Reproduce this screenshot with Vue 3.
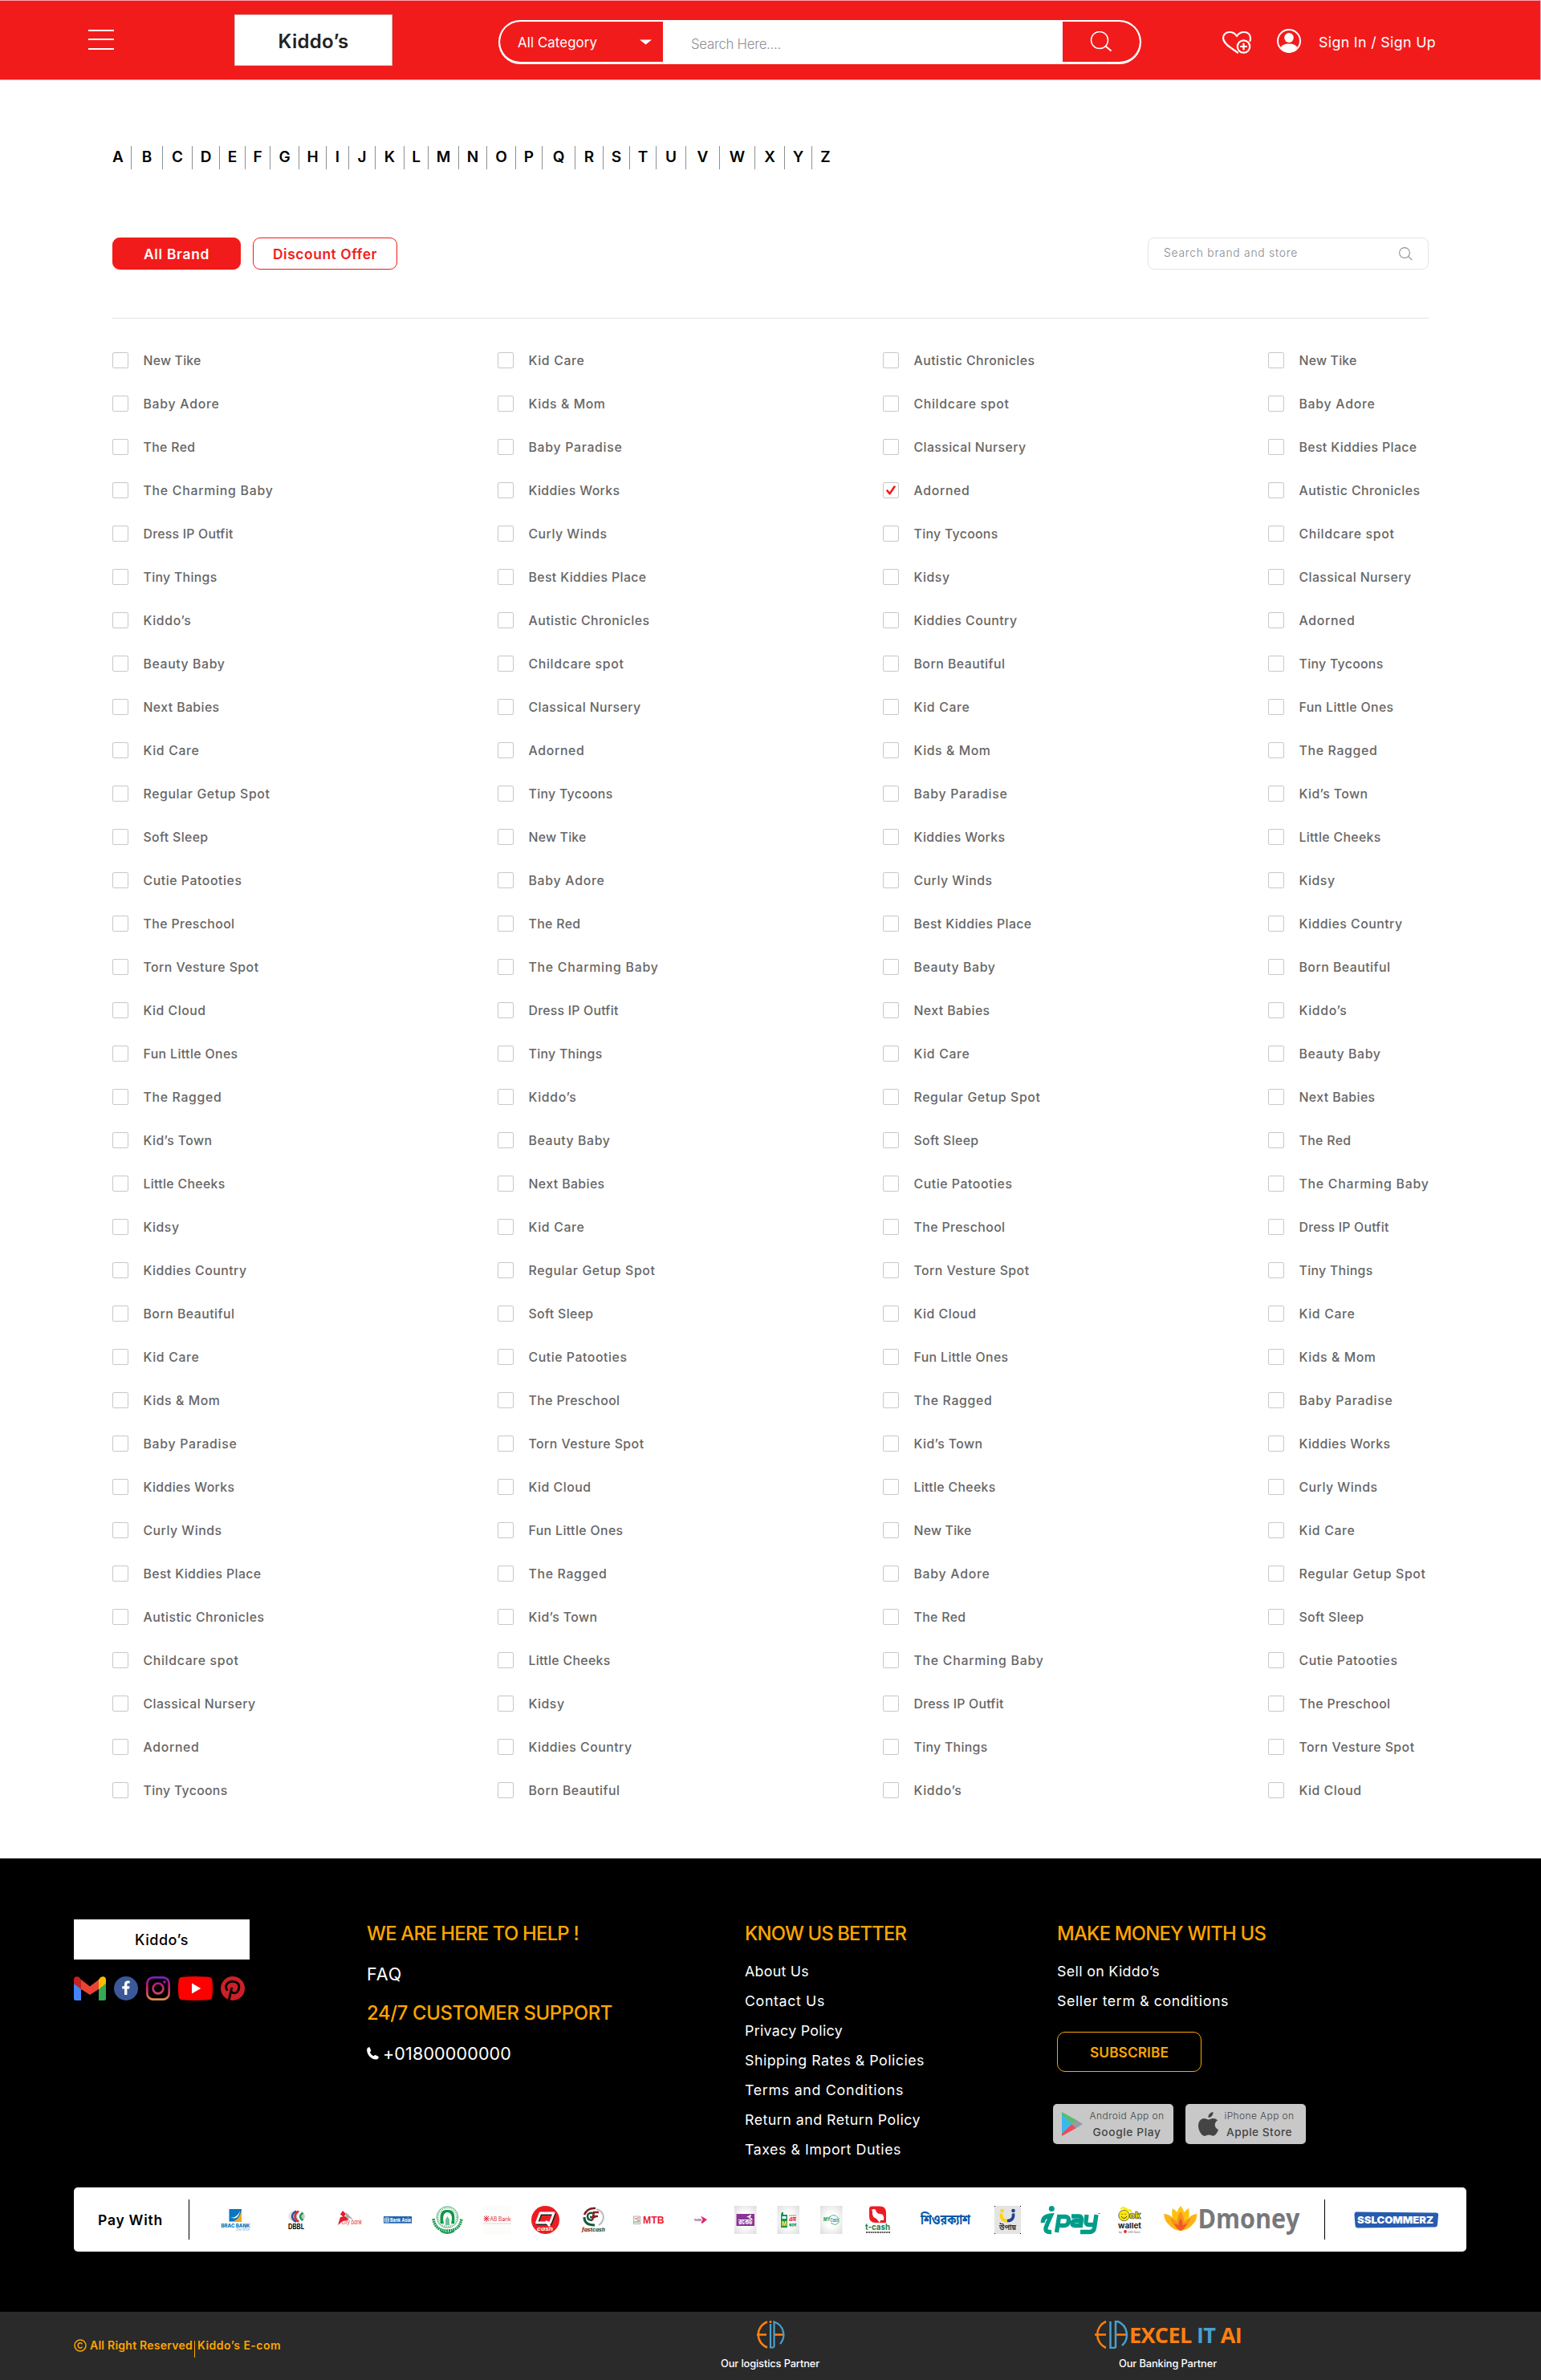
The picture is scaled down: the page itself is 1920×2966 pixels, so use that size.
<script setup>
const letters = 'ABCDEFGHIJKLMNOPQRSTUVWXYZ'.split('')

const columns = [
  ['New Tike', 'Baby Adore', 'The Red', 'The Charming Baby', 'Dress IP Outfit', 'Tiny Things', 'Kiddo’s', 'Beauty Baby', 'Next Babies', 'Kid Care', 'Regular Getup Spot', 'Soft Sleep', 'Cutie Patooties', 'The Preschool', 'Torn Vesture Spot', 'Kid Cloud', 'Fun Little Ones', 'The Ragged', 'Kid’s Town', 'Little Cheeks', 'Kidsy', 'Kiddies Country', 'Born Beautiful', 'Kid Care', 'Kids & Mom', 'Baby Paradise', 'Kiddies Works', 'Curly Winds', 'Best Kiddies Place', 'Autistic Chronicles', 'Childcare spot', 'Classical Nursery', 'Adorned', 'Tiny Tycoons'],
  ['Kid Care', 'Kids & Mom', 'Baby Paradise', 'Kiddies Works', 'Curly Winds', 'Best Kiddies Place', 'Autistic Chronicles', 'Childcare spot', 'Classical Nursery', 'Adorned', 'Tiny Tycoons', 'New Tike', 'Baby Adore', 'The Red', 'The Charming Baby', 'Dress IP Outfit', 'Tiny Things', 'Kiddo’s', 'Beauty Baby', 'Next Babies', 'Kid Care', 'Regular Getup Spot', 'Soft Sleep', 'Cutie Patooties', 'The Preschool', 'Torn Vesture Spot', 'Kid Cloud', 'Fun Little Ones', 'The Ragged', 'Kid’s Town', 'Little Cheeks', 'Kidsy', 'Kiddies Country', 'Born Beautiful'],
  ['Autistic Chronicles', 'Childcare spot', 'Classical Nursery', 'Adorned', 'Tiny Tycoons', 'Kidsy', 'Kiddies Country', 'Born Beautiful', 'Kid Care', 'Kids & Mom', 'Baby Paradise', 'Kiddies Works', 'Curly Winds', 'Best Kiddies Place', 'Beauty Baby', 'Next Babies', 'Kid Care', 'Regular Getup Spot', 'Soft Sleep', 'Cutie Patooties', 'The Preschool', 'Torn Vesture Spot', 'Kid Cloud', 'Fun Little Ones', 'The Ragged', 'Kid’s Town', 'Little Cheeks', 'New Tike', 'Baby Adore', 'The Red', 'The Charming Baby', 'Dress IP Outfit', 'Tiny Things', 'Kiddo’s'],
  ['New Tike', 'Baby Adore', 'Best Kiddies Place', 'Autistic Chronicles', 'Childcare spot', 'Classical Nursery', 'Adorned', 'Tiny Tycoons', 'Fun Little Ones', 'The Ragged', 'Kid’s Town', 'Little Cheeks', 'Kidsy', 'Kiddies Country', 'Born Beautiful', 'Kiddo’s', 'Beauty Baby', 'Next Babies', 'The Red', 'The Charming Baby', 'Dress IP Outfit', 'Tiny Things', 'Kid Care', 'Kids & Mom', 'Baby Paradise', 'Kiddies Works', 'Curly Winds', 'Kid Care', 'Regular Getup Spot', 'Soft Sleep', 'Cutie Patooties', 'The Preschool', 'Torn Vesture Spot', 'Kid Cloud'],
]
const isChecked = (c, r) => c === 2 && r === 3

// rendered width of each brand name
const widths = {
  'New Tike': 72, 'Baby Adore': 95, 'The Red': 65, 'The Charming Baby': 162, 'Dress IP Outfit': 112,
  'Tiny Things': 92, 'Kiddo’s': 60, 'Beauty Baby': 102, 'Next Babies': 95, 'Kid Care': 70,
  'Regular Getup Spot': 158, 'Soft Sleep': 81, 'Cutie Patooties': 123, 'The Preschool': 114,
  'Torn Vesture Spot': 144, 'Kid Cloud': 78, 'Fun Little Ones': 118, 'The Ragged': 98, 'Kid’s Town': 86,
  'Little Cheeks': 102, 'Kidsy': 45, 'Kiddies Country': 129, 'Born Beautiful': 114, 'Kids & Mom': 96,
  'Baby Paradise': 117, 'Kiddies Works': 114, 'Curly Winds': 98, 'Best Kiddies Place': 147,
  'Autistic Chronicles': 151, 'Childcare spot': 119, 'Classical Nursery': 140, 'Adorned': 70, 'Tiny Tycoons': 105,
}

// label, rendered width
const helpLinks = [
  ['About Us', 80], ['Contact Us', 100], ['Privacy Policy', 122], ['Shipping Rates & Policies', 224],
  ['Terms and Conditions', 198], ['Return and Return Policy', 219], ['Taxes & Import Duties', 195],
]
const sellLinks = [['Sell on Kiddo’s', 128], ['Seller term & conditions', 214]]

// Tracks a label out (or in) so that it takes the given width.
const vFit = {
  mounted(el, { value }) {
    const natural = el.getBoundingClientRect().width
    el.style.letterSpacing = `${(value - natural) / el.textContent.length}px`
  },
}
</script>

<template>
  <div class="page">
    <header class="header">
      <svg class="menu" width="32" height="26" viewBox="0 0 32 26"><path d="M0 2h32M0 13h32M0 25h32" stroke="#fff" stroke-width="2" /></svg>
      <div class="logo"><span v-fit="88">Kiddo’s</span></div>
      <div class="search">
        <div class="cat">
          <span v-fit="99">All Category</span>
          <svg width="15" height="7" viewBox="0 0 15 7"><path d="M0 .5h15L7.500 6.500z" fill="#fff" /></svg>
        </div>
        <div class="field"><span v-fit="112">Search Here....</span></div>
        <div class="go">
          <svg width="28" height="26" viewBox="0 0 28 26" fill="none" stroke="#fff" stroke-width="1.500"><circle cx="12" cy="11" r="10.500" /><path d="M19.500 18.500l7 6" stroke-width="2" /></svg>
        </div>
      </div>
      <svg class="heart" width="38" height="30" viewBox="0 0 38 30" fill="none" stroke="#fff" stroke-width="2.200" stroke-linecap="round" stroke-linejoin="round">
        <path d="M20 27.500C14 23 2 17 2 9.500 2 5 5.500 2 10 2c4 0 7 2 9 5 2-3 5-5 9-5 4.500 0 8 3 8 8q0 1.500-.5 3" />
        <circle cx="27.500" cy="20" r="7.700" /><path d="M27.500 16.500v7M24 20h7" />
      </svg>
      <svg class="user" width="30" height="30" viewBox="0 0 30 30">
        <circle cx="15" cy="15" r="14" fill="none" stroke="#fff" stroke-width="2" />
        <ellipse cx="15" cy="11" rx="5.800" ry="6" fill="#fff" /><path d="M4 24c2-4 6-5.500 11-5.500S24 20 26 24c-3 4-7 5.500-11 5.500S7 28 4 24z" fill="#fff" />
      </svg>
      <span v-fit="146" class="sign">Sign In / Sign Up</span>
    </header>

    <main>
      <nav class="letters"><span v-for="l in letters" :key="l">{{ l }}</span></nav>
      <div class="toolbar">
        <button class="btn on"><span v-fit="82">All Brand</span></button>
        <button class="btn"><span v-fit="130">Discount Offer</span></button>
        <div class="find">
          <span v-fit="167">Search brand and store</span>
          <svg width="17" height="17" viewBox="0 0 17 17" fill="none" stroke="#8d9297" stroke-width="1.100"><circle cx="7" cy="7" r="6.400" /><path d="M11.500 11.500l5 4.700" /></svg>
        </div>
      </div>
      <div class="brands">
        <ul v-for="(col, c) in columns" :key="c">
          <li v-for="(name, r) in col" :key="r">
            <i class="box"><svg v-if="isChecked(c, r)" width="12" height="12" viewBox="0 0 12 12"><path d="M1.500 6.500l3 3.800L10.500 1.500" fill="none" stroke="#f21b1b" stroke-width="2.600" stroke-linecap="round" stroke-linejoin="round" /></svg></i>
            <span v-fit="widths[name]">{{ name }}</span>
          </li>
        </ul>
      </div>
    </main>

    <footer>
      <div class="cols">
        <div class="brand">
          <div class="flogo"><span v-fit="67">Kiddo’s</span></div>
          <div class="social">
            <svg width="40" height="30" viewBox="0 0 40 30"><path d="M0 9v18.500A2.500 2.500 0 0 0 2.500 30H9V14z" fill="#4285f4" /><path d="M40 9v18.500a2.500 2.500 0 0 1-2.500 2.500H31V14z" fill="#34a853" /><path d="M31 4v12l9-7V4c0-4-4-5-7-2.500z" fill="#fbbc04" /><path d="M9 16V4l11 8.500L31 4v12l-11 7z" fill="#ea4335" /><path d="M0 4v5l9 7V4L7 1.500C4-1 0 0 0 4z" fill="#c5221f" /></svg>
            <svg width="30" height="30" viewBox="0 0 30 30"><circle cx="15" cy="15" r="15" fill="#3b5998" /><path d="M13 23v-7.500h-2.700v-3.300H13V10c0-3 1.800-4.400 4.300-4.400l2.400.1v2.900h-1.800c-1.200 0-1.500.7-1.500 1.500v2.100h3.100l-.4 3.300h-2.700V23z" fill="#fff" /></svg>
            <svg width="30" height="30" viewBox="0 0 30 30" fill="none" stroke="url(#ig)" stroke-width="2.700"><defs><linearGradient id="ig" gradientUnits="userSpaceOnUse" x1="0" y1="0" x2="0" y2="30"><stop offset="0" stop-color="#7024c4" /><stop offset=".35" stop-color="#c21975" /><stop offset=".7" stop-color="#d0465c" /><stop offset="1" stop-color="#e09b3d" /></linearGradient></defs><rect x="1.350" y="1.350" width="27.300" height="27.300" rx="7.500" /><circle cx="15" cy="15" r="6.400" /><circle cx="23" cy="7" r="1.800" fill="#a01f9a" stroke="none" /></svg>
            <svg width="43" height="30" viewBox="0 0 43 30"><path d="M5 .8Q21-.8 38 .8q4 .5 4.400 4 1.200 10 0 20.300-.5 3.700-4.400 4.100-17 1.600-33 0-4-.4-4.400-4.100-1.200-10 0-20.300Q1 1.200 5 .8z" fill="#f00" /><path d="M17 8.500v13L28.200 15z" fill="#fff" /></svg>
            <svg width="30" height="30" viewBox="0 0 30 30"><circle cx="15" cy="15" r="15" fill="#cb2027" /><path d="M10 30.500l3.800-16.500M8.500 17.500C4 12.500 8 6.300 15 6.300c5.500 0 8.300 3.500 7.800 7.700-.5 5-3.800 7.200-6.500 6.800-2-.2-3-1.300-3.500-2.300" fill="none" stroke="#000" stroke-width="2.800" /></svg>
          </div>
        </div>
        <div class="help">
          <p class="title"><span v-fit="264">WE ARE HERE TO HELP !</span></p>
          <p><span v-fit="44">FAQ</span></p>
          <p class="title"><span v-fit="306">24/7 CUSTOMER SUPPORT</span></p>
          <p><svg width="15" height="16" viewBox="0 0 15 16"><path d="M.3 2.500C1 .8 2.700-.2 3.700.6l1.500 3.600c.2.900-.9 1.500-1.300 2 .8 2.500 2.500 4.200 4.700 5 .7-.5 1.300-1.500 2.200-1.200l3.500 1.800c1 .8.200 2.700-1.300 3.500C6 17-1 8.500.3 2.500z" fill="#fff" /></svg><span v-fit="160">+01800000000</span></p>
        </div>
        <div class="links">
          <h3><span v-fit="201">KNOW US BETTER</span></h3>
          <p v-for="[t, w] in helpLinks" :key="t"><span v-fit="w">{{ t }}</span></p>
        </div>
        <div class="links">
          <h3><span v-fit="260">MAKE MONEY WITH US</span></h3>
          <p v-for="[t, w] in sellLinks" :key="t"><span v-fit="w">{{ t }}</span></p>
          <button class="sub"><span v-fit="98">SUBSCRIBE</span></button>
          <div class="apps">
            <div class="app play">
              <svg width="26" height="30" viewBox="0 0 26 30"><path d="M0 2v26l12.500-13z" fill="#3bb8ea" /><path d="M0 0v3l12.500 12L18 10z" fill="#58bd70" /><path d="M0 30v-3l12.500-12L18 20z" fill="#ee4a5b" /><path d="M17.500 9.500L26 15l-8.500 5.500L12.500 15z" fill="#969ca3" /></svg>
              <div><small v-fit="93">Android App on</small><b v-fit="85">Google Play</b></div>
            </div>
            <div class="app apple">
              <svg width="25" height="30" viewBox="0 0 25 30"><path d="M18.500 0c.4 3.500-2.600 7.200-6 7 -.4-3.400 2.700-6.700 6-7zM24 10.500c-5 3-4 9.500 1 11.500-1 3-3.500 7.700-6.500 7.800-2 0-2.800-1.200-5.300-1.200S10 29.800 8 29.900C4 30 0 22.500 0 17.500 0 11.500 3.500 8.200 7.200 8.100c2.300 0 4 1.400 5.500 1.400s3.500-1.600 6-1.500c2.300.1 4.100 1 5.300 2.500z" fill="#444" /></svg>
              <div><small v-fit="87">iPhone App on</small><b v-fit="82">Apple Store</b></div>
            </div>
          </div>
        </div>
      </div>

      <div class="pay">
        <strong><span v-fit="81">Pay With</span></strong>
        <i class="bar"></i>
        <!-- every logo sits in its own cell; x runs on from cell to cell -->
        <svg width="99" height="80" viewBox="236 0 99 80">
          <rect x="285.500" y="27" width="15.500" height="15.500" fill="#0b75bd" /><path d="M301 28v14.500h-14c8 0 12-6 14-14.500z" fill="#e8ab27" /><path d="M287 37c5 2 10-2 12-8-1 7-5 12-12 8z" fill="#fff" />
          <text x="275.500" y="50" font-size="6.200" font-weight="800" fill="#0b75bd" textLength="36" lengthAdjust="spacingAndGlyphs">BRAC BANK</text>
          <text x="294" y="54" font-size="4" fill="#7db4da" textLength="17" lengthAdjust="spacingAndGlyphs">আস্থা অবিচল</text>
        </svg>
        <svg width="65" height="80" viewBox="335 0 65 80">
          <defs><linearGradient id="db"><stop offset="0" stop-color="#eee" /><stop offset=".5" stop-color="#bbb" /><stop offset="1" stop-color="#ccc" /></linearGradient></defs>
          <ellipse cx="369.500" cy="36" rx="10.500" ry="7" fill="url(#db)" />
          <g fill="none" stroke-width="2.400"><path d="M369 29.500q-10 6.500 0 13.500" stroke="#2c4fa0" /><path d="M372 29.500q-9 6.500 0 13.500" stroke="#e32636" /><path d="M375 30.500q-7 5.500 0 11" stroke="#fff" /><path d="M377.500 31.500q-7 5 0 9.500" stroke="#179a52" /></g>
          <text x="359" y="52" font-size="8.500" font-weight="700" textLength="20" lengthAdjust="spacingAndGlyphs">DBBL</text>
        </svg>
        <svg width="64" height="80" viewBox="400 0 64 80">
          <path d="M427 29l4 4-3 4-4-3.500zM424 37l6-1 5 4-8 2-6 5z" fill="#e31e2d" /><path d="M431 31l9 9-9-3z" fill="#a9a9ab" />
          <text x="426" y="45.500" font-size="7.500" font-style="italic" fill="#e31e2d" textLength="25" lengthAdjust="spacingAndGlyphs">city bank</text>
        </svg>
        <svg width="62" height="80" viewBox="464 0 62 80">
          <rect x="478" y="36" width="35" height="8.700" fill="#2263ae" /><path d="M479.500 38h5v5h-5zM482 38v5M479.500 40.500h5" fill="none" stroke="#fff" stroke-width=".8" />
          <text x="486" y="42.800" font-size="6" font-weight="700" fill="#fff" textLength="26" lengthAdjust="spacingAndGlyphs">Bank Asia</text>
        </svg>
        <svg width="64" height="80" viewBox="526 0 64 80">
          <circle cx="557.500" cy="37" r="13.200" fill="none" stroke="#11984b" stroke-width=".8" /><circle cx="557.500" cy="37" r="11.300" fill="none" stroke="#11984b" stroke-width="1.500" stroke-dasharray="1 1.300" opacity=".7" />
          <path d="M549 45c-2-16 3-17 8.500-17s10.500 1 8.500 17h-4c3-10-1-14-4.500-14s-7 4-4.500 14z" fill="#11984b" /><path d="M555 47v-7l2.500-4 2.500 4v7z" fill="#11984b" opacity=".6" />
          <path d="M540 39q2 15 17.500 15T575 39" fill="none" stroke="#11984b" stroke-width="3.500" stroke-dasharray="2 .7" /><path d="M549 54.500q8.500 5 17 0" fill="none" stroke="#11984b" stroke-width="2" />
        </svg>
        <svg width="60" height="80" viewBox="590 0 60 80">
          <rect x="602" y="23" width="35" height="35" fill="#fcfdfb" /><path d="M603 36l6 6M609 36l-6 6M606 35v8M602.500 39h7" stroke="#e0293b" stroke-width="1" />
          <text x="610.500" y="41.500" font-size="7" fill="#e0293b" textLength="26" lengthAdjust="spacingAndGlyphs">AB Bank</text><path d="M602.500 45h34" stroke="#aaa" stroke-dasharray="1 1.500" />
        </svg>
        <svg width="60" height="80" viewBox="650 0 60 80">
          <circle cx="679.500" cy="40.500" r="17.500" fill="#ed1c24" />
          <g fill="none" stroke-linejoin="round"><path d="M674 33.500h17l-4.500 12h-17z" stroke="#222" stroke-width="3" /><path d="M673 32h17l-4.500 12h-17z" stroke="#fff" stroke-width="2.800" /><path d="M680 42l5 6" stroke="#fff" stroke-width="3" /></g>
          <text x="669" y="53.500" font-size="6.500" font-weight="700" font-style="italic" fill="#fff" textLength="20" lengthAdjust="spacingAndGlyphs">cash</text>
        </svg>
        <svg width="62" height="80" viewBox="710 0 62 80">
          <g fill="none" stroke-width="2"><path d="M728 34q4-9 14-8" stroke="#7c1f22" stroke-width="2.500" /><path d="M743 27q8 2 9 10-1 7-6 10" stroke="#bbb" /><path d="M728 37q0 10 13 10" stroke="#175a38" stroke-width="3" /><path d="M739 32q-7-1-7 4t6 5M735 37h7" stroke="#175a38" stroke-width="2.500" /><path d="M746 31h-6l-2 10M739 36h6" stroke="#8a2025" stroke-width="2.500" /></g>
          <text x="725" y="54.500" font-size="6" font-weight="800" font-style="italic" fill="#7c1f22" textLength="29" lengthAdjust="spacingAndGlyphs">fast<tspan fill="#175a38">cash</tspan></text>
        </svg>
        <svg width="74" height="80" viewBox="772 0 74 80">
          <rect x="789.500" y="36" width="8.500" height="9.500" fill="#f5f5f5" stroke="#999" stroke-width=".7" /><path d="M791 39h3M794 41h3" stroke="#e8303d" /><path d="M794 38h3M790 43h7" stroke="#53a36c" />
          <text class="mtb" x="801" y="45" font-size="12.700" font-weight="700" fill="#ed1c2c" textLength="26.500" lengthAdjust="spacingAndGlyphs">MTB</text>
        </svg>
        <svg width="52" height="80" viewBox="846 0 52 80">
          <path d="M873 35.500l8 4.500-6 5-1.500-1 2-4z" fill="#dc2374" /><text x="865" y="42" font-size="4" font-weight="700" fill="#854078" textLength="9" lengthAdjust="spacingAndGlyphs">rKash</text>
        </svg>
        <svg width="58" height="80" viewBox="898 0 58 80">
          <defs><radialGradient id="tile" r=".8"><stop offset=".3" stop-color="#fff" /><stop offset="1" stop-color="#d5d5d5" /></radialGradient></defs>
          <rect x="915" y="23" width="27.500" height="35" fill="url(#tile)" /><rect x="917.500" y="33" width="22.500" height="15" fill="#8b3494" /><path d="M930 37l6-3.500-1 4z" fill="#fff" />
          <text x="920" y="45.500" font-size="9" font-weight="700" fill="#fff" textLength="17.500" lengthAdjust="spacingAndGlyphs">রকেট</text>
        </svg>
        <svg width="53" height="80" viewBox="956 0 53 80">
          <rect x="968.500" y="23" width="27.500" height="35" fill="url(#tile)" /><path d="M973 34l1-3h2v3h5v16h-8z" fill="#159456" /><path d="M974.500 36h5v3h-5z" fill="#fff" /><text x="973.700" y="47.500" font-size="8" font-weight="800" fill="#ffe23c" textLength="6.500" lengthAdjust="spacingAndGlyphs">M</text>
          <text x="983" y="42" font-size="7.500" font-weight="800" fill="#e4252f" textLength="9" lengthAdjust="spacingAndGlyphs">এম</text><text x="983" y="49" font-size="6.500" font-weight="800" fill="#159456" textLength="9" lengthAdjust="spacingAndGlyphs">ক্যাশ</text><path d="M983 35h9" stroke="#e4252f" stroke-width=".7" />
        </svg>
        <svg width="55" height="80" viewBox="1009 0 55 80">
          <rect x="1022" y="23" width="27.500" height="35" fill="url(#tile)" /><path d="M1033 37l5-2.500 4 1 3 3v5l-4 3-6-2" fill="none" stroke="#5db86c" stroke-width="1" />
          <text x="1026" y="42" font-size="6" font-weight="800" fill="#2da253" textLength="8.500" lengthAdjust="spacingAndGlyphs">MY</text><text x="1034.500" y="43" font-size="5.500" font-weight="700" font-style="italic" fill="#1f87c7" textLength="10" lengthAdjust="spacingAndGlyphs">Cash</text>
        </svg>
        <svg width="66" height="80" viewBox="1064 0 66 80">
          <path d="M1086 23.500h10q8 0 8 8v12.500h-13q-8 0-8-8v-9q0-3.500 3-3.500z" fill="#ed1c24" /><path d="M1086 28q3-2 5 0 1 5 6 5t4 8l-4 0-1 3-4-5q-6-2-5-9z" fill="#fff" />
          <text x="1078" y="52.700" font-size="11" font-weight="700" fill="#1b8145" textLength="31" lengthAdjust="spacingAndGlyphs">t-cash</text><path d="M1079 56h30" stroke="#222" stroke-width="1.500" stroke-dasharray="2 .8" />
        </svg>
        <svg width="94" height="80" viewBox="1130 0 94 80">
          <text x="1147" y="45.500" font-size="18" font-weight="700" fill="#0659ac" textLength="62" lengthAdjust="spacingAndGlyphs">শিওরক্যাশ</text>
        </svg>
        <svg width="60" height="80" viewBox="1224 0 60 80">
          <rect x="1239" y="23" width="33" height="35" fill="#e4e4e4" /><path d="M1239 23h1v1h-1zM1271 23h1v1h-1zM1239 57h1v1h-1zM1271 57h1v1h-1z" />
          <g fill="none" stroke-width="3.600"><path d="M1247.500 32.500q-1 9 7.500 9" stroke="#ffd502" /><path d="M1255 41.500q8.500 0 7.500-9" stroke="#233f93" /></g><circle cx="1248.500" cy="29" r="2.300" fill="#ffd502" /><circle cx="1262.500" cy="29" r="2.300" fill="#233f93" />
          <text x="1245" y="52.500" font-size="9" font-weight="700" fill="#333" textLength="21" lengthAdjust="spacingAndGlyphs">উপায়</text>
        </svg>
        <svg width="98" height="80" viewBox="1284 0 98 80">
          <g fill="none" stroke="#009c8a" stroke-width="5.300"><circle cx="1310.300" cy="26.500" r="3.500" fill="#009c8a" stroke="none" /><path d="M1299.500 44q-1-8 10-9-5 11-6.500 15.500-1 5.500 7 5" />
          <path d="M1316.500 56l3-19.500h7.500q5 0 4.500 5-.5 6-5.500 6h-5.500M1335 36h9.500q3.500 0 3 4l-1 7.500h-7.500q-3.500 0-3-3.200.5-2.600 4-2.600h7M1354 34l-1 8.500q-.3 4 3.500 4h8M1366 34l-2.500 16.500q-.8 5-6 5H1346" /><path d="M1368 32.500h3" stroke-width=".8" /></g>
        </svg>
        <svg width="53" height="80" viewBox="1382 0 53 80">
          <circle cx="1400.500" cy="35" r="6.700" fill="#fbe900" stroke="#333" stroke-width=".7" /><path d="M1397 36q3.500 5 7 0M1398 33v1M1402 33v1" fill="none" stroke="#333" stroke-width="1" />
          <path d="M1396 27l3-2 6 4 3-1 2 3M1401 25l4 3" fill="none" stroke="#fbe900" stroke-width="2" /><text x="1407" y="39" font-size="12" font-weight="900" fill="#fbe900" stroke="#333" stroke-width=".7" textLength="14.500" lengthAdjust="spacingAndGlyphs">ok</text>
          <text x="1393" y="50.500" font-size="9.500" font-weight="700" fill="#222" textLength="29" lengthAdjust="spacingAndGlyphs">wallet</text><text x="1394" y="56.500" font-size="3.500" fill="#555">by</text><circle cx="1402" cy="55" r="1.900" fill="#e4252f" /><text x="1405" y="56.500" font-size="3.500" fill="#777" textLength="16">ONE Bank</text>
        </svg>
        <svg width="215" height="80" viewBox="1435 0 215 80">
          <path d="M1471 23q-7 8-4 17 2 9 4 14 2-5 4-14 3-9-4-17zM1461 26q-2 8 1 15l9 12 9-12q3-7 1-15-7 4-9 12h-2q-2-8-9-12z" fill="#ffc20e" /><path d="M1450 33q1 9 6 13 5 7 15 8 10-1 15-8 5-4 5.500-13-7 0-12 7l-8 8-8-8q-6-7-13.500-7z" fill="#fdb515" />
          <path d="M1471 30q-6 8-4 15l4 9 4-9q2-7-4-15zM1458 38q2 10 13 16 11-6 13-16-8 2-13 11-5-9-13-11z" fill="#f7941e" /><path d="M1471 38q-4 7-2 11l2 5 2-5q2-4-2-11zM1463 45q3 7 8 9 5-2 8-9-6 1-8 6-2-5-8-6z" fill="#f15a24" />
          <text class="dm" x="1492.500" y="51" font-size="34.500" font-weight="700" fill="#77787b" textLength="127" lengthAdjust="spacingAndGlyphs">Dmoney</text>
        </svg>
        <i class="bar"></i>
        <svg width="160" height="80" viewBox="1652 0 160 80">
          <path d="M1691 30.500l99 1q4 0 3 4l-1 11q-.5 3-3 3l-96 1q-3 0-3.500-3l-1-13q0-4 2.500-4z" fill="#265cb0" />
          <text x="1692" y="44.500" font-size="12" font-weight="900" fill="#fff" textLength="95" lengthAdjust="spacingAndGlyphs">SSLCOMMERZ</text>
        </svg>
      </div>

      <div class="bottom">
        <svg class="copy" width="16" height="16" viewBox="0 0 16 16" fill="none" stroke="#ffa500" stroke-width="1.500"><circle cx="8" cy="8" r="7" /><path d="M10.500 6.300q-1-1.600-2.700-1.500Q5.300 5 5.200 8q.1 3 2.600 3.200 1.700.1 2.700-1.500" /></svg>
        <span v-fit="128">All Right Reserved</span><i></i><span v-fit="104">Kiddo’s E-com</span>
        <div class="partner one">
          <svg width="36" height="35" viewBox="0 0 36 35" fill="none"><path d="M14 1.500A17 17 0 0 0 14 33.500M1 17.500h12M23 17.500h12" stroke="#ff8010" stroke-width="2.500" /><path d="M22.500 33V1.500A17 17 0 0 1 30 29M18 4v29.500h4.500" stroke="#4b9fcc" stroke-width="2.200" /><circle cx="18" cy="1.500" r="1.500" fill="#ff8010" /></svg>
          <span v-fit="123">Our logistics Partner</span>
        </div>
        <div class="partner two">
          <div class="excel">
            <svg width="44" height="35" viewBox="0 0 44 35" fill="none"><path d="M15 1A18 18 0 0 0 15 34M1 17.500h14M28 17.500h12" stroke="#ff8010" stroke-width="2.500" /><path d="M27 34V1.200h3A18 18 0 0 1 35 31M20.500 1v33H27" stroke="#4b9fcc" stroke-width="2.500" /></svg>
            <strong v-fit="140">EXCEL <em>IT</em> AI</strong>
          </div>
          <span v-fit="122">Our Banking Partner</span>
        </div>
      </div>
    </footer>
  </div>
</template>

<style>
body { margin: 0; background: #fff; }
</style>

<style scoped>
.page { width: 1920px; height: 2966px; overflow: hidden; font-family: Inter, "Noto Sans", sans-serif; color: #000; }
.page * { box-sizing: border-box; }
span, small, b { display: inline-block; white-space: nowrap; }
p, h3, ul { margin: 0; padding: 0; }
svg { display: block; flex: none; }
button { font-family: inherit; padding: 0; }

.header { height: 100px; background: #f21b1b; border: 1px solid #fba5b8; border-left: 0; display: flex; align-items: flex-start; color: #fff; }
.menu { margin: 35px 0 0 110px; }
.logo { width: 197px; height: 64px; margin: 17px 0 0 150px; background: #fff; border: 1px solid #c9c9c9; color: #222; font-size: 24px; font-weight: 600; line-height: 65px; text-align: center; }
.search { width: 801px; height: 55px; margin: 24px 0 0 132px; border: 2px solid #fff; border-bottom-width: 3px; border-radius: 27px; display: flex; overflow: hidden; background: #fff; }
.cat { width: 203px; background: #f21b1b; padding: 1px 14px 0 22px; display: flex; justify-content: space-between; align-items: center; font-size: 16.800px; font-weight: 400; border-radius: 25px 0 0 25px; }
.field { width: 498px; padding: 3px 0 0 35px; line-height: 50px; font-size: 16.800px; font-weight: 300; color: #909090; }
.go { width: 96px; background: #f21b1b; padding: 12px 0 0 34px; border-radius: 0 25px 25px 0; }
.heart { margin: 37px 0 0 100px; }
.user { margin: 35px 0 0 31px; }
.sign { margin: 36px 0 0 22px; line-height: 32px; font-size: 17.800px; font-weight: 400; }

main { height: 2216px; padding: 82px 140px 0; }
.letters { margin-left: -9px; display: grid; grid-template-columns: 33px 39px 37px 34px 32px 31px 36px 34px 28px 33px 36px 30px 38px 35px 36px 33px 41px 35px 33px 33px 37px 42px 44px 37px 34px 33px; font-size: 19px; font-weight: 600; line-height: 27px; text-align: center; }
.letters span { height: 29px; border-right: 1px solid #8c8f93; }
.letters span:last-child { border: 0; }
.toolbar { margin-top: 85px; display: flex; height: 40px; }
.btn { width: 180px; border: 1px solid #f21b1b; border-radius: 9px; background: #fff; color: #f21b1b; font-size: 17.400px; font-weight: 600; }
.btn.on { width: 160px; margin-right: 15px; background: #f21b1b; color: #fff; }
.find { width: 350px; margin-left: auto; border: 1px solid #e3e3e3; border-radius: 8px; padding: 0 19px; display: flex; align-items: center; justify-content: space-between; font-size: 13.800px; font-weight: 300; color: #858a8f; }
.find span { margin-top: -3px; }
.brands { margin-top: 60px; padding-top: 25px; border-top: 1px solid #e3e3e3; display: grid; grid-template-columns: repeat(4, 480px); }
li { height: 54px; display: flex; align-items: center; font-size: 15.800px; font-weight: 500; color: #666; }
.box { width: 20px; height: 20px; margin-right: 18.500px; border: 1px solid #c8c8c8; border-radius: 2px; display: flex; align-items: center; justify-content: center; }

footer { height: 650px; background: #000; color: #fff; }
.cols { height: 410px; padding: 76px 0 0 92px; display: grid; grid-template-columns: 365px 471px 389px 1fr; }
.flogo { width: 219px; height: 50px; background: #fff; color: #000; text-align: center; font-size: 18px; font-weight: 500; line-height: 51px; }
.social { margin-top: 21px; display: flex; gap: 10px; }
.help { margin-top: -7px; }
.help p { height: 49.700px; line-height: 50px; display: flex; align-items: center; font-size: 21.500px; font-weight: 400; }
.help svg { margin-right: 5px; }
.help .title, h3 { color: #ffa500; font-size: 23.800px; font-weight: 500; }
h3 { line-height: 35px; margin-bottom: 11px; }
.links p { height: 37px; line-height: 37px; font-size: 17.800px; font-weight: 400; }
.sub { display: block; width: 180px; height: 50px; margin-top: 20px; border: 1px solid #ffa500; border-radius: 10px; background: none; color: #ffa500; font-size: 17.300px; font-weight: 600; }
.apps { margin: 40px 0 0 -5px; display: flex; gap: 15px; }
.app { width: 150px; height: 50px; border-radius: 5px; background: #c8c8c8; color: #444; display: flex; align-items: center; padding-left: 11px; }
.app div { width: 94px; margin-left: 8px; text-align: center; }
.apple { padding-left: 16px; }
.apple div { width: 88px; margin-left: 7px; }
.app small, .app b { display: inline-block; font-size: 12px; font-weight: 300; line-height: 20px; vertical-align: top; }
.app b { font-size: 13.700px; font-weight: 500; }

.pay { width: 1735px; height: 80px; margin-left: 92px; background: #fff; border-radius: 5px; display: flex; align-items: center; color: #000; }
.pay strong { width: 143px; padding-left: 30px; font-size: 17.500px; font-weight: 600; }
.bar { width: 1px; height: 50px; background: #000; flex: none; }
.pay svg text { font-family: Inter, "Noto Sans Bengali", "Noto Sans", sans-serif; }
.pay svg .dm { font-family: "Open Sans", sans-serif; }
.pay svg .mtb { font-family: "Liberation Sans", sans-serif; }

.bottom { height: 85px; margin-top: 75px; background: #2a2a2a; display: flex; align-items: flex-start; color: #ffa500; font-size: 14px; font-weight: 600; line-height: 84px; }
.copy { margin: 34px 4px 0 92px; }
.bottom > i { width: 1px; height: 21px; margin: 36px 3px 0 2px; background: #ffa500; }
.partner { display: flex; flex-direction: column; align-items: center; padding-top: 11px; color: #fff; font-size: 12.800px; font-weight: 500; line-height: 37px; }
.excel { height: 35px; display: flex; }
.excel strong { font: 700 27px/35px "Open Sans", sans-serif; color: #ff8010; white-space: nowrap; }
.excel em { font-style: normal; color: #4b9fcc; }
.one { margin-left: 548px; }
.two { margin-left: 342px; }
</style>
